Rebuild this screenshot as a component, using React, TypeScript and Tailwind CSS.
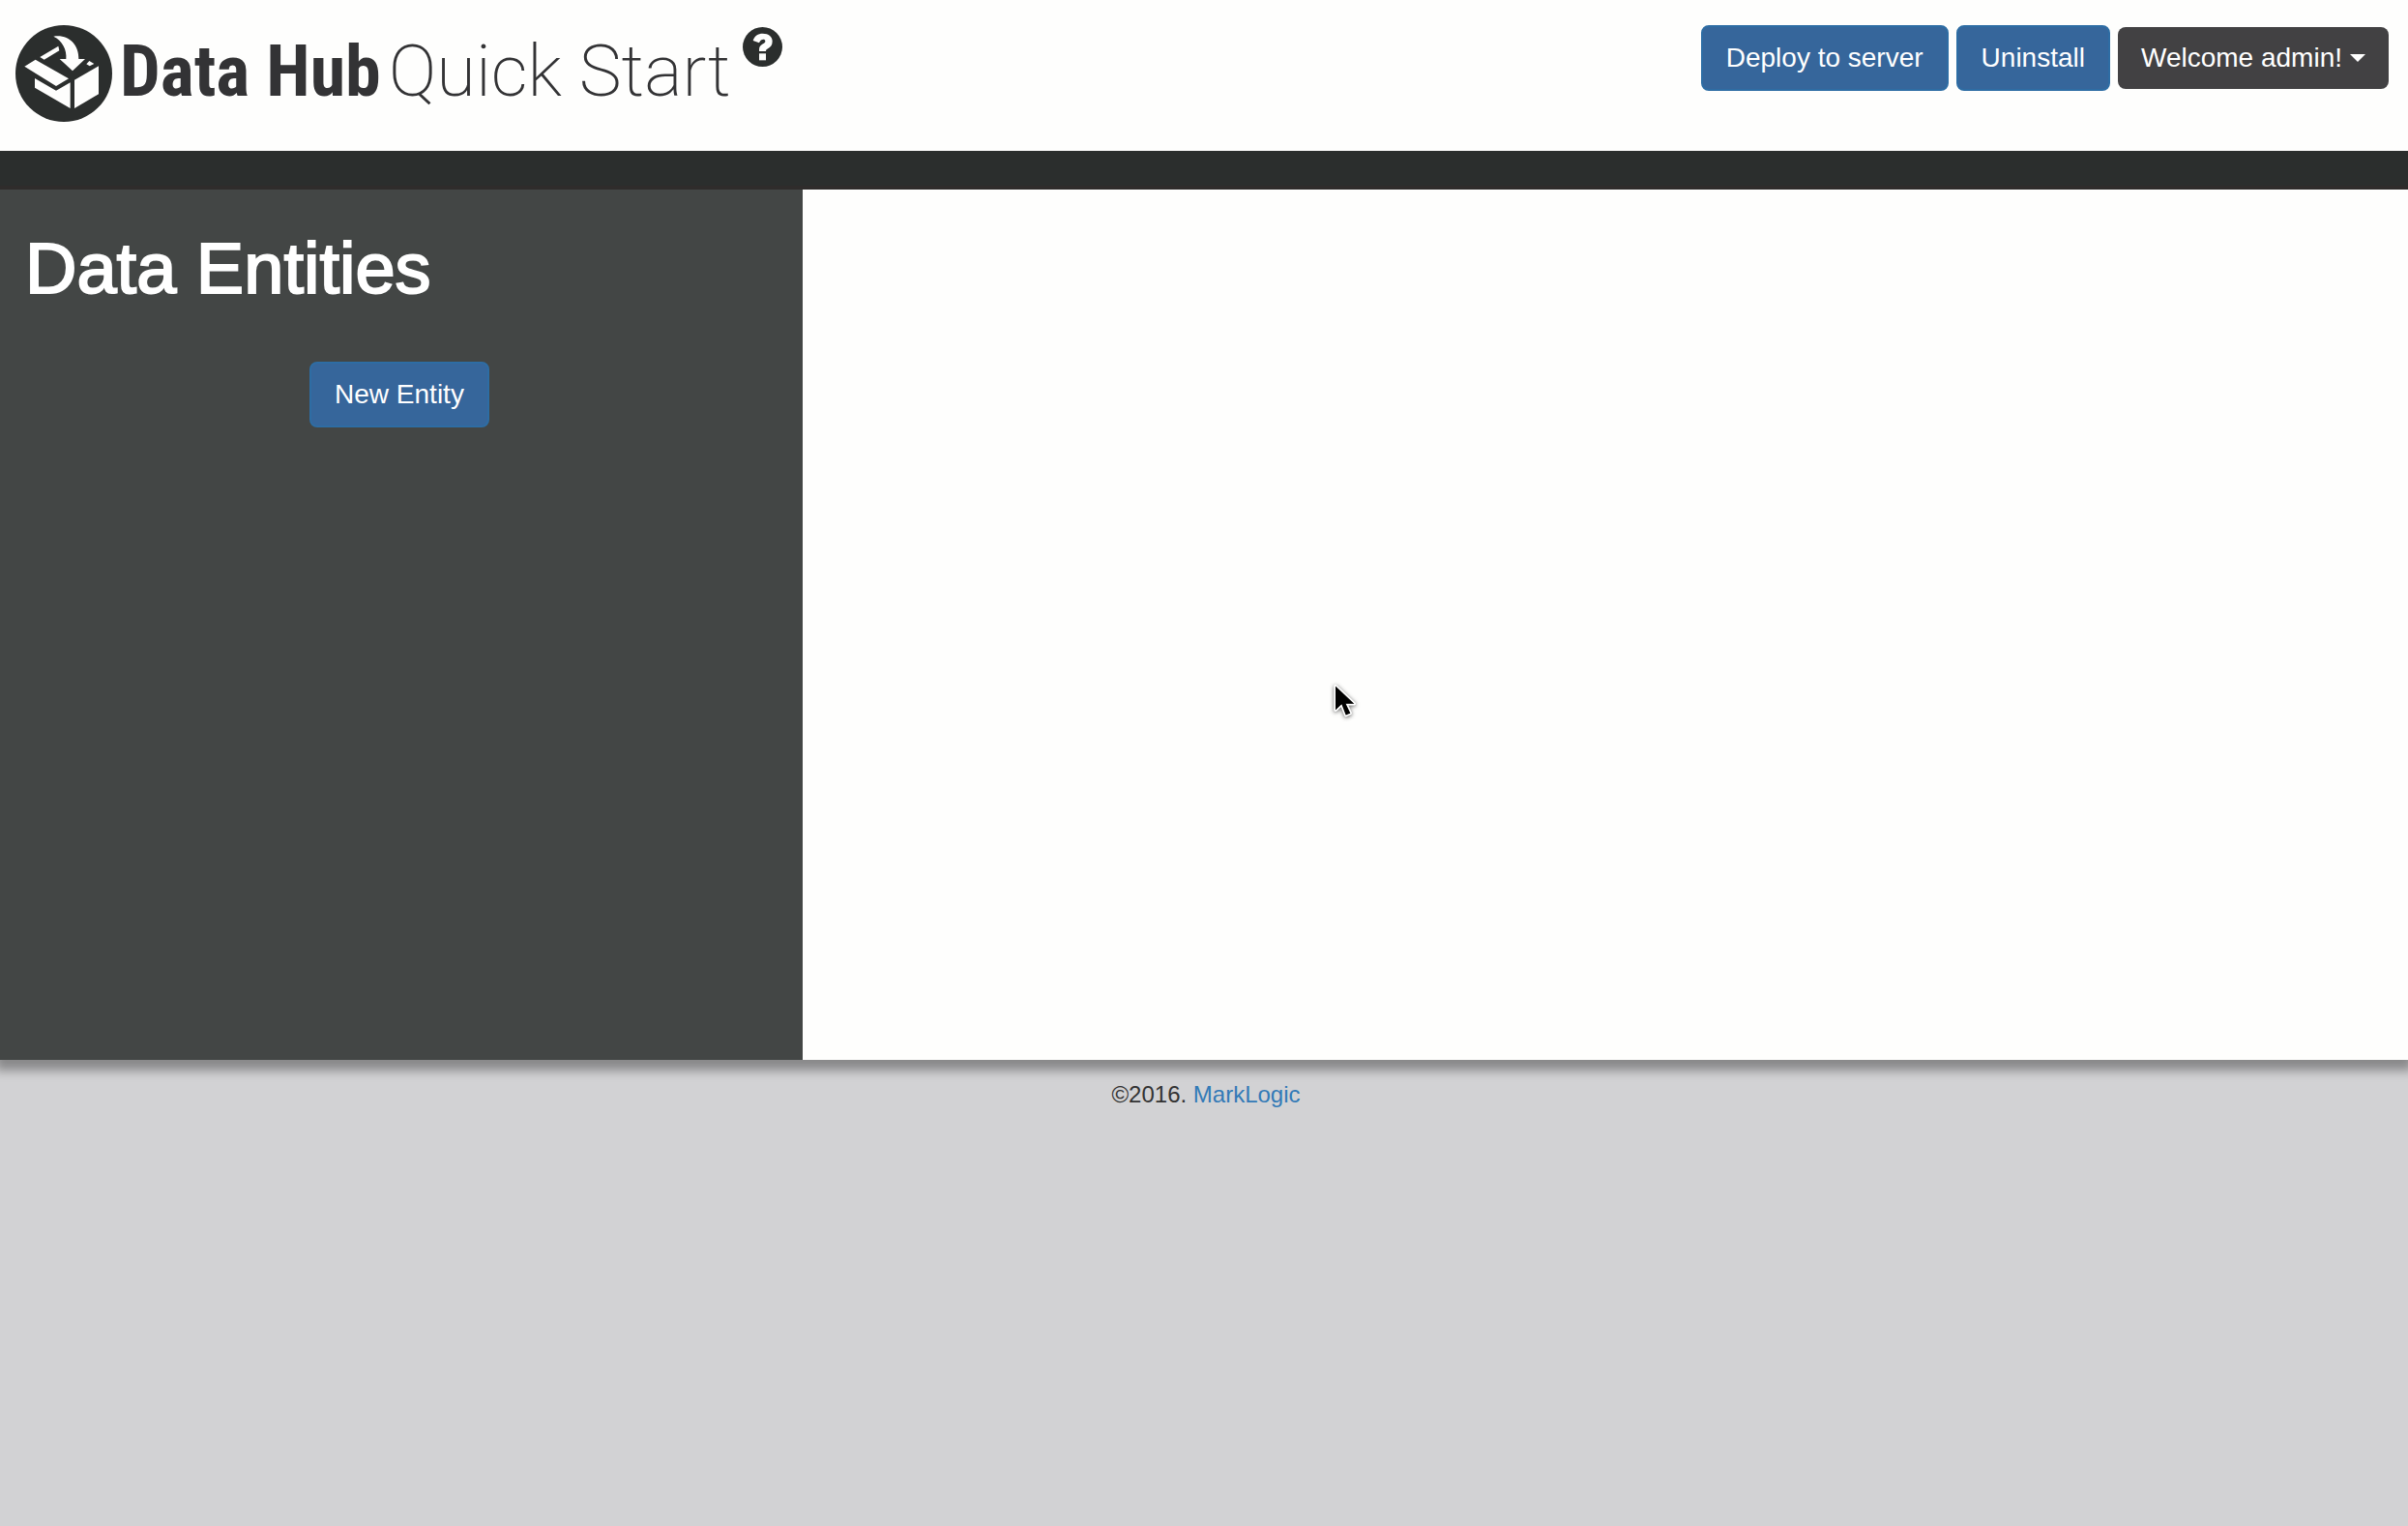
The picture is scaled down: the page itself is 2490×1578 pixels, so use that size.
import type { ReactNode } from "react";

function LogoMark() {
  return (
    <svg viewBox="48 48 300 300" className="size-[100px] shrink-0" aria-hidden="true">
      <circle cx="198" cy="198" r="150" fill="#2b2e2d" />
      <g fill="#fefefd">
        <path d="M124 147 181 113 184 127 137 155Z" />
        <path d="M76 176 110 155 213 214 174 237Z" />
        <path d="M108 213 174 251 218 226V306L108 242Z" />
        <path d="M231 218 306 175V262L231 306Z" />
        <path d="M268 169 277 159 292 168 278 175Z" />
        <path d="M166 83C213 76 245 108 244 153H264L225 190 185 153H205C208 124 193 96 166 83Z" />
      </g>
    </svg>
  );
}

function HelpIcon() {
  return (
    <svg viewBox="0 0 123 123" className="size-[41px]" aria-hidden="true">
      <circle cx="61.5" cy="61.5" r="61.5" fill="#2b2e2d" />
      <path
        d="M32 42C37 26 47 20 62 20C81 20 92 30 92 44C92 56 86 62 78 67C73 70 72 71 72 75H51V70C51 61 55 57 63 52C68 49 70 47 70 44C70 36 56 36 51 49Z"
        fill="#fefefd"
      />
      <rect x="51" y="82" width="21" height="21" fill="#fefefd" />
    </svg>
  );
}

function Pointer() {
  return (
    <svg
      viewBox="-8 -8 84 122"
      className="pointer-events-none absolute top-[508px] left-[547px] h-[41px] w-[28px] drop-shadow-[0_1px_2px_rgba(0,0,0,0.6)]"
      aria-hidden="true"
    >
      <path
        d="M4 8V82L23 64 36 98 50 92 36 63H62Z"
        fill="#000"
        stroke="#fff"
        strokeWidth="10"
        strokeLinejoin="round"
        paintOrder="stroke"
      />
    </svg>
  );
}

function PrimaryButton({ children }: { children: ReactNode }) {
  return (
    <button
      type="button"
      className="rounded-lg border-2 border-[#2e6da4] bg-[#36669b] px-6 py-3 text-[28px] leading-10 whitespace-nowrap text-white"
    >
      {children}
    </button>
  );
}

export default function App() {
  return (
    <div className="min-h-screen bg-[#d2d2d4] font-['Liberation_Sans',Arial,sans-serif] text-[#333333]">
      <div className="relative bg-[#fefefd] shadow-[0_6px_10px_5px_rgba(0,0,0,0.35)]">
        <header className="flex h-39 items-start justify-between pr-5 pl-4">
          <div className="flex items-start pt-[26px]">
            <LogoMark />
            <div className="flex items-baseline gap-2 pl-2 text-[74px] leading-24 whitespace-nowrap text-[#333335]">
              <span className="font-['Roboto_Condensed',Roboto,sans-serif] font-bold">Data Hub</span>
              <span className="font-['Roboto',sans-serif] font-extralight">Quick Start</span>
            </div>
            <button type="button" aria-label="Help" className="ml-3 pt-0.5">
              <HelpIcon />
            </button>
          </div>
          <div className="flex items-center gap-2 pt-[26px]">
            <PrimaryButton>Deploy to server</PrimaryButton>
            <PrimaryButton>Uninstall</PrimaryButton>
            <button
              type="button"
              aria-haspopup="menu"
              className="flex items-center gap-2 rounded-lg bg-[#424143] px-6 py-3 text-[28px] leading-10 whitespace-nowrap text-white"
            >
              Welcome admin!
              <span className="border-x-8 border-t-8 border-x-transparent border-t-white" />
            </button>
          </div>
        </header>
        <div className="h-10 border-b-4 border-[#2f2c2b] bg-[#2b2e2d]" />
        <div className="flex h-[900px]">
          <aside className="w-1/3 bg-[#434645] pr-8 pl-[26px]">
            <h1 className="pt-[42px] text-[74px] leading-20 text-white [-webkit-text-stroke:2px_white]">
              Data Entities
            </h1>
            <div className="flex justify-center pt-14 pl-0.5">
              <PrimaryButton>New Entity</PrimaryButton>
            </div>
          </aside>
          <main className="relative flex-1">
            <Pointer />
          </main>
        </div>
      </div>
      <footer className="pt-5 pl-1 text-center text-2xl">
        ©2016.{" "}
        <a href="#marklogic" className="text-[#337ab7]">
          MarkLogic
        </a>
      </footer>
    </div>
  );
}
